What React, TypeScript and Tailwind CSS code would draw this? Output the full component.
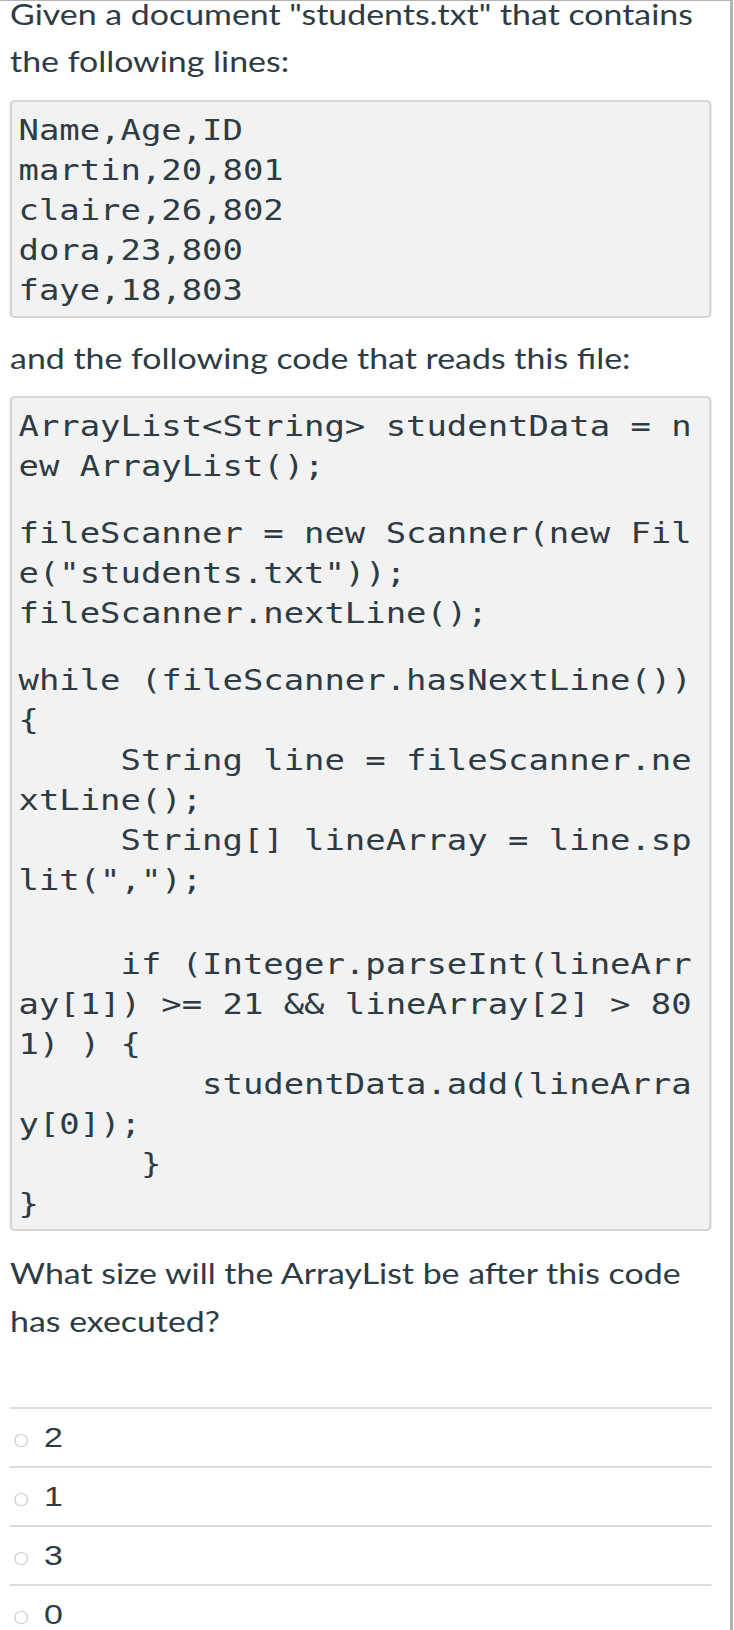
import React from 'react';

type CodeLine = string | { gap: number };

const fileLines: CodeLine[] = ['Name,Age,ID', 'martin,20,801', 'claire,26,802', 'dora,23,800', 'faye,18,803'];

// lines are broken where the original pre wrapped them (break-all)
const codeLines: CodeLine[] = [
  'ArrayList<String> studentData = n',
  'ew ArrayList();',
  { gap: 27 },
  'fileScanner = new Scanner(new Fil',
  'e("students.txt"));',
  'fileScanner.nextLine();',
  { gap: 27 },
  'while (fileScanner.hasNextLine())',
  '{',
  '     String line = fileScanner.ne',
  'xtLine();',
  '     String[] lineArray = line.sp',
  'lit(",");',
  { gap: 44 },
  '     if (Integer.parseInt(lineArr',
  'ay[1]) >= 21 && lineArray[2] > 80',
  '1) ) {',
  '         studentData.add(lineArra',
  'y[0]);',
  '      }',
  '}',
];

const answers = ['2', '1', '3', '0'];

const CodeBlock: React.FC<{ lines: CodeLine[]; bottom: string }> = ({ lines, bottom }) => (
  <div
    className={`rounded-[4px] border-2 border-[#d3d7da] bg-[#f2f2f2] pl-[5px] pt-[9px] ${bottom} font-['DejaVu_Sans_Mono',monospace] text-[28px] text-[#2d3b45]`}
  >
    {lines.map((line, i) =>
      typeof line === 'string' ? (
        <div key={i} className="h-[40px] whitespace-pre leading-[40px]">
          {line}
        </div>
      ) : (
        <div key={i} style={{ height: line.gap }} />
      )
    )}
  </div>
);

const App: React.FC = () => {
  return (
    <div className="h-[1630px] w-[733px] overflow-hidden border-t border-r-[3px] border-[#b3b3b3] bg-white">
      {/* the capture is stretched sideways, so the whole sheet is widened */}
      <div className="-mt-[10px] w-[603px] origin-left scale-x-[1.21] pl-[8.3px] pr-[15.5px] font-['Lato',sans-serif] text-[28px] text-[#2d3b45]">
        <p className="mb-[15px] leading-[47px]">
          Given a document "students.txt" that contains the following lines:
        </p>

        <div className="mb-[17px]">
          <CodeBlock lines={fileLines} bottom="pb-[5px]" />
        </div>

        <p className="mb-[14px] leading-[47px]">and the following code that reads this file:</p>

        <div className="mb-[18px]">
          <CodeBlock lines={codeLines} bottom="pb-[4px]" />
        </div>

        <p className="leading-[48px]">What size will the ArrayList be after this code has executed?</p>

        <div className="mt-[62px]">
          {answers.map((a) => (
            <div key={a} className="flex items-center border-t-2 border-[#dcdcdc] pt-[9px] pb-[8px]">
              <span className="ml-[3.3px] mt-[5px] h-[13.5px] w-[11.8px] rounded-full border border-[#cbcbcb] bg-white" />
              <span className="ml-[13px] font-['Liberation_Sans',Arial,sans-serif] text-[28px] leading-[40px]">
                {a}
              </span>
            </div>
          ))}
        </div>
      </div>
    </div>
  );
};

export default App;
